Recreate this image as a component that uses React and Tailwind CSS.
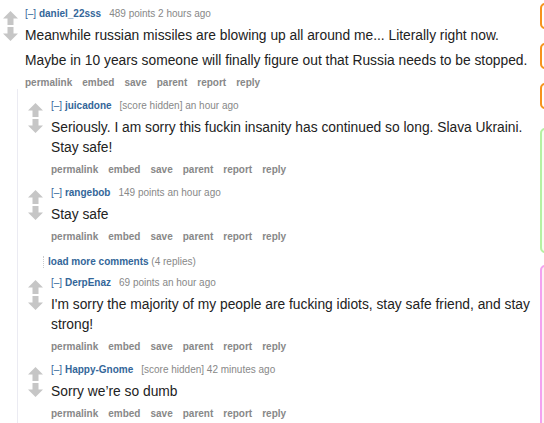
const comments = {
  top: {
    author: "daniel_22sss",
    meta: "489 points 2 hours ago",
    body: [
      "Meanwhile russian missiles are blowing up all around me... Literally right now.",
      "Maybe in 10 years someone will finally figure out that Russia needs to be stopped.",
    ],
  },
  replies: [
    {
      author: "juicadone",
      meta: "[score hidden] an hour ago",
      body: ["Seriously. I am sorry this fuckin insanity has continued so long. Slava Ukraini. Stay safe!"],
      pt: "pt-[11px]",
    },
    {
      author: "rangebob",
      meta: "149 points an hour ago",
      body: ["Stay safe"],
      pt: "pt-[11px]",
    },
    { more: true },
    {
      author: "DerpEnaz",
      meta: "69 points an hour ago",
      body: ["I'm sorry the majority of my people are fucking idiots, stay safe friend, and stay strong!"],
      pt: "pt-[9px]",
    },
    {
      author: "Happy-Gnome",
      meta: "[score hidden] 42 minutes ago",
      body: ["Sorry we\u2019re so dumb"],
      pt: "pt-[11px]",
    },
  ],
}

const actions = ["permalink", "embed", "save", "parent", "report", "reply"]

function Arrow({ down }) {
  return (
    <svg width="15" height="14" viewBox="0 0 15 14" className="block">
      {down ? (
        <path d="M4.5 0 L10.5 0 L10.5 6.5 L15 6.5 L7.5 14 L0 6.5 L4.5 6.5 Z" fill="#c6c6c6" />
      ) : (
        <path d="M7.5 0 L15 7.5 L10.5 7.5 L10.5 14 L4.5 14 L4.5 7.5 L0 7.5 Z" fill="#c6c6c6" />
      )}
    </svg>
  )
}

function Comment({ author, meta, body, gap }) {
  return (
    <div className="flex">
      {/* votes */}
      <div className="w-[15px] shrink-0 pt-[3px] flex flex-col gap-[2px]">
        <Arrow />
        <Arrow down />
      </div>

      <div className={`flex-1 min-w-0 ${gap}`}>
        <p className="text-[10px] leading-[12px] text-[#888] whitespace-nowrap">
          <span className="text-[#369]">[–] </span>
          <span className="text-[#369] font-bold">{author}</span>
          <span className="ml-[8px]">{meta}</span>
        </p>

        <div className="mt-[6px] flex flex-col gap-[5px]">
          {body.map((line, i) => (
            <p key={i} className="text-[13.8px] leading-[20px] text-[#222]">{line}</p>
          ))}
        </div>

        <div className="mt-[6px] flex gap-[10px] text-[10px] leading-[12px] font-bold text-[#888]">
          {actions.map((a) => (
            <span key={a}>{a}</span>
          ))}
        </div>
      </div>
    </div>
  )
}

export default function App() {
  return (
    <div className="w-[544px] h-[423px] overflow-hidden bg-white flex font-['Liberation_Sans',Arial,sans-serif]">
      <div className="w-[536px] shrink-0 pl-[3px] pt-[8px]">
        <Comment {...comments.top} gap="ml-[7px]" />

        {/* replies */}
        <div className="ml-[14px] border-l border-[#ebebf2] pl-[10px] h-[400px]">
          {comments.replies.map((c, i) =>
            c.more ? (
              <div key={i} className="ml-[15px] mt-[13px] border-l border-dotted border-[#ccc] pl-[4px] text-[10px] leading-[12px]">
                <span className="text-[#369] font-bold">load more comments</span>
                <span className="text-[#888]"> (4 replies)</span>
              </div>
            ) : (
              <div key={i} className={c.pt}>
                <Comment {...c} gap="ml-[8px]" />
              </div>
            )
          )}
        </div>
      </div>

      {/* cut off side column */}
      <div className="w-[4px] ml-[4px] overflow-hidden">
        <div className="w-[24px] flex flex-col">
          <div className="mt-[3px] h-[26px] rounded-[5px] border-2 border-[#f7931e] bg-white" />
          <div className="mt-[14px] h-[26px] rounded-[5px] border-2 border-[#f7931e] bg-white" />
          <div className="mt-[14px] h-[26px] rounded-[5px] border-2 border-[#f7931e] bg-white" />
          <div className="mt-[19px] h-[125px] rounded-[5px] border-2 border-[#b5f2a2] bg-[#f6fff3]" />
          <div className="mt-[12px] h-[200px] rounded-[5px] border-2 border-[#f3a2f0] bg-[#fdf1f3]" />
        </div>
      </div>
    </div>
  )
}
